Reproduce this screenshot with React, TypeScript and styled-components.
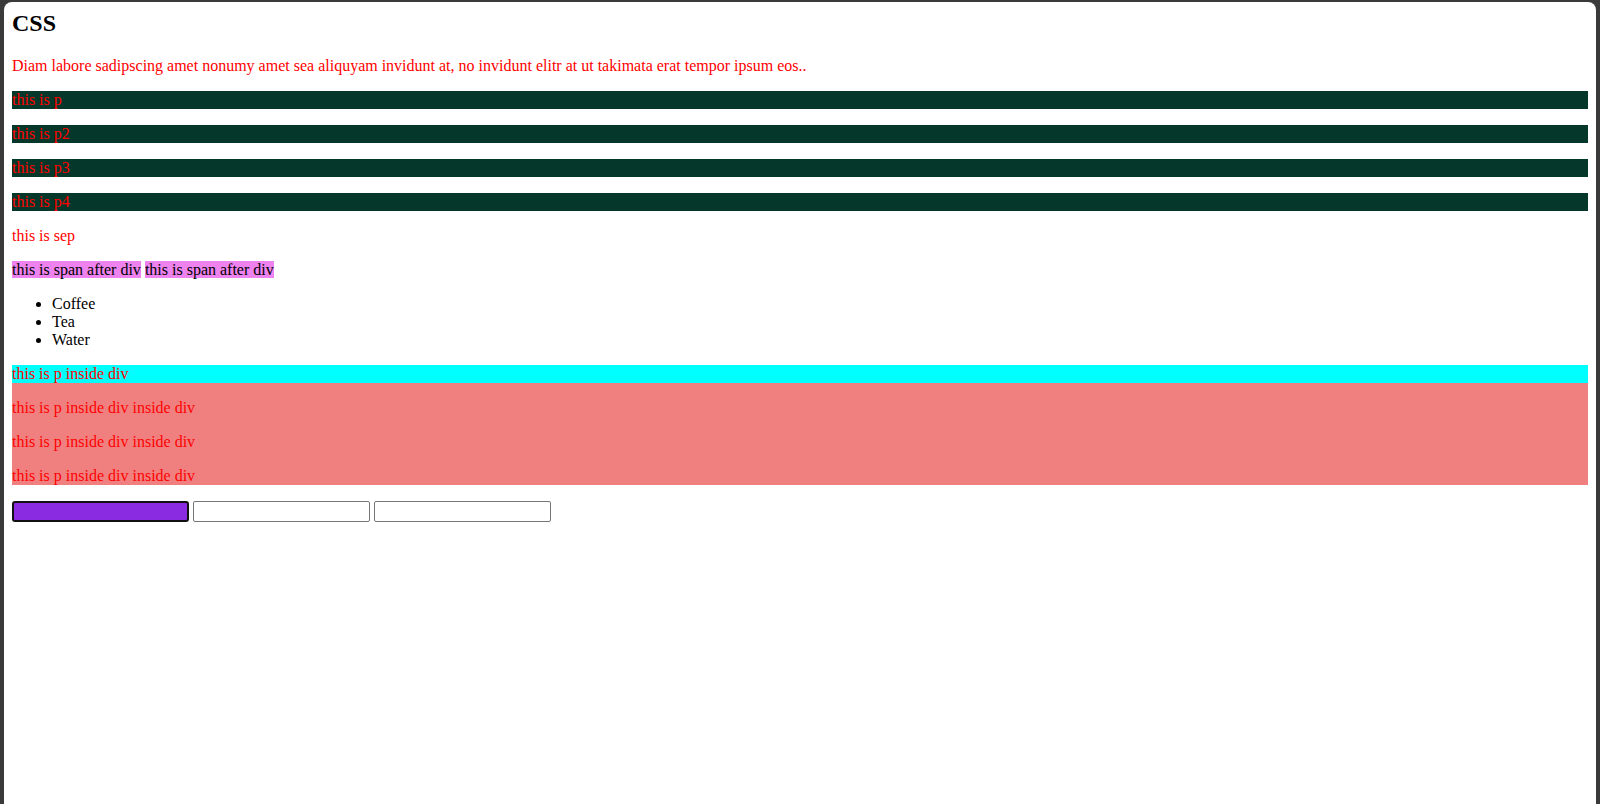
import React from 'react'
import styled, { createGlobalStyle } from 'styled-components'

const GlobalStyle = createGlobalStyle`
    html, body {
        margin: 0;
        padding: 0;
        background: #3a3a3a;
    }
    body {
        font-family: "Liberation Serif", "Times New Roman", serif;
        font-size: 16px;
    }
`

const Window = styled.div`
    margin: 2px 4px 0;
    min-height: 802px;
    box-sizing: border-box;
    padding: 8px;
    background: #ffffff;
    border-radius: 8px 8px 0 0;
    color: #000000;
`

const Title = styled.h2`
    margin: 0 0 19.92px;
    font-size: 24px;
    font-weight: bold;
`

const RedText = styled.p<{ $bg?: string; $flush?: boolean }>`
    margin: ${({ $flush }) => ($flush ? '0' : '16px 0')};
    color: #ff0000;
    background: ${({ $bg }) => $bg || 'transparent'};
`

const SpanRow = styled.p`
    margin: 16px 0;
`

const Tag = styled.span`
    background: #ee82ee;
    color: #000000;
`

const List = styled.ul`
    margin: 16px 0;
    padding-left: 40px;
    list-style: disc;
`

const Inner = styled.div`
    background: #f08080;
    padding-top: 16px;

    & > p {
        margin: 0 0 16px;
    }
    & > p:last-child {
        margin-bottom: 0;
    }
`

const InputRow = styled.div`
    margin-top: 16px;
    font-size: 0;
    display: flex;
    gap: 4px;
`

const Field = styled.input<{ $active?: boolean }>`
    box-sizing: border-box;
    width: 177px;
    height: 21px;
    margin: 0;
    padding: 1px 2px;
    border: ${({ $active }) => ($active ? '2px solid #111111' : '1px solid #767676')};
    border-radius: ${({ $active }) => ($active ? '3px' : '2px')};
    background: ${({ $active }) => ($active ? '#8a2be2' : '#ffffff')};
    outline: none;
`

const greens = ['this is p', 'this is p2', 'this is p3', 'this is p4']

const App = () => {
    return (
        <>
            <GlobalStyle />
            <Window>
                <Title>CSS</Title>
                <RedText>
                    Diam labore sadipscing amet nonumy amet sea aliquyam invidunt at, no invidunt elitr at ut takimata erat tempor ipsum eos..
                </RedText>
                {greens.map(g => (
                    <RedText key={g} $bg="#05382a">{g}</RedText>
                ))}
                <RedText>this is sep</RedText>
                <SpanRow>
                    <Tag>this is span after div</Tag> <Tag>this is span after div</Tag>
                </SpanRow>
                <List>
                    <li>Coffee</li>
                    <li>Tea</li>
                    <li>Water</li>
                </List>
                <div>
                    <RedText $bg="#00ffff" $flush>this is p inside div</RedText>
                    <Inner>
                        <RedText>this is p inside div inside div</RedText>
                        <RedText>this is p inside div inside div</RedText>
                        <RedText>this is p inside div inside div</RedText>
                    </Inner>
                </div>
                <InputRow>
                    <Field type="text" $active readOnly />
                    <Field type="text" readOnly />
                    <Field type="text" readOnly />
                </InputRow>
            </Window>
        </>
    )
}

export default App
